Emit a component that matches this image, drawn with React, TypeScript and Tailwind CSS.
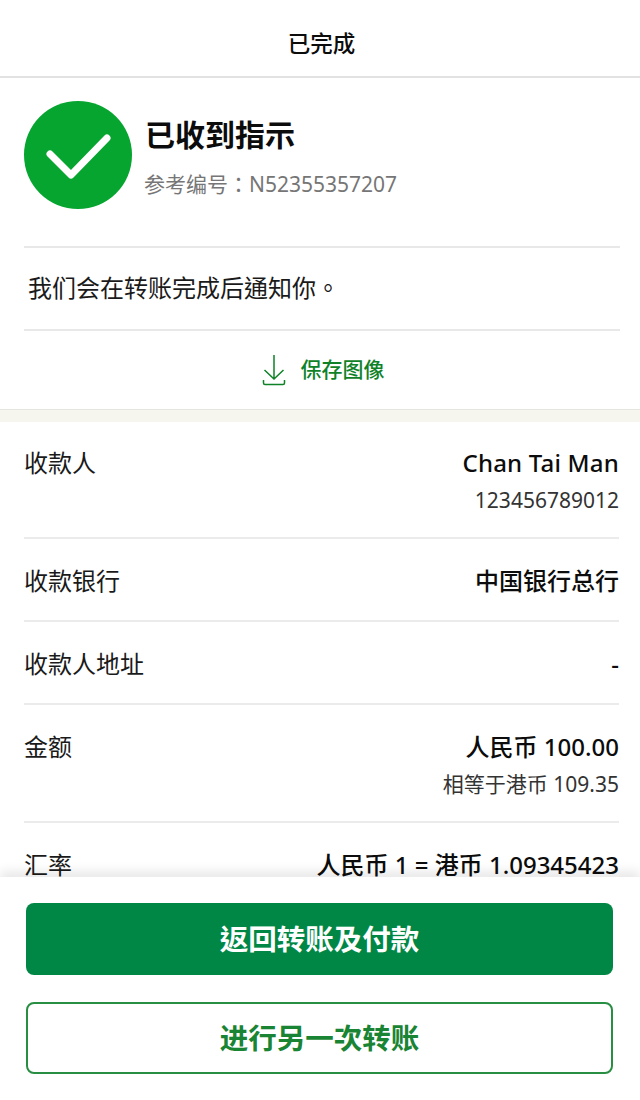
function Row({ label, value, sub, cls, valueCls }: { label: string; value: string; sub?: string; cls: string; valueCls?: string }) {
  return (
    <div className={`flex justify-between border-b-2 border-[#ebebeb] ${cls}`}>
      <div className="text-[24px] leading-[32px] text-[#1a1a1a]">{label}</div>
      <div className="flex flex-col items-end">
        <div className={`text-[24px] leading-[32px] font-medium text-[#0c0c0c] ${valueCls ?? ""}`}>{value}</div>
        {sub && <div className="mt-[7px] text-[21px] leading-[28px] text-[#333]">{sub}</div>}
      </div>
    </div>
  );
}

export default function App() {
  return (
    <div className="flex h-[1100px] w-[640px] flex-col overflow-hidden bg-white font-['Noto_Sans','Noto_Sans_CJK_TC',sans-serif]">
      <header className="flex h-[78px] shrink-0 items-center justify-center border-b-2 border-[#e2e2e2] pt-[12px] pl-[3px] text-[22.500px] font-medium text-[#0c0c0c]">
        已完成
      </header>
      <main className="min-h-0 flex-1 overflow-hidden">
        <section className="pr-[20px] pl-[24px]">
          <div className="flex h-[170px] items-start gap-[13px] border-b-2 border-[#e8e8e8] pt-[23px]">
            <div className="flex h-[108px] w-[108px] shrink-0 items-center justify-center rounded-full bg-[#05a52f]">
              <svg viewBox="0 0 108 108" className="h-[108px] w-[108px]" fill="none">
                <path d="M26 53 L47 74 L83 37" stroke="#fff" strokeWidth="7" strokeLinecap="round" strokeLinejoin="round" />
              </svg>
            </div>
            <div className="pt-[13px]">
              <div className="text-[30px] leading-[42px] font-semibold text-[#0c0c0c]">已收到指示</div>
              <div className="mt-[13px] -ml-[1px] text-[21px] leading-[30px] text-[#767676]">参考编号：N52355357207</div>
            </div>
          </div>
          <div className="flex h-[83px] items-center border-b-2 border-[#e8e8e8] pb-[2px] pl-[4px] text-[24px] text-[#1a1a1a]">
            我们会在转账完成后通知你。
          </div>
          <div className="flex h-[78px] items-center justify-center gap-[15px] pl-[2px] text-[21px] font-medium text-[#0f8228]">
            <svg viewBox="0 0 24 32" className="h-[32px] w-[24px]" fill="none" stroke="#0f8228" strokeWidth="1.5">
              <path d="M12 1 V25 M2.500 16 L12 25 L21.500 16" />
              <path d="M1.500 26 V29 Q1.500 30.500 3 30.500 H21 Q22.500 30.500 22.500 29 V26" />
            </svg>
            <span>保存图像</span>
          </div>
        </section>
        <div className="h-[13px] border-t border-[#e6e6e0] bg-[#f6f6ee]" />
        <section className="pr-[21px] pl-[24px]">
          <Row label="收款人" value="Chan Tai Man" valueCls="tracking-[0.2px]" sub="123456789012" cls="h-[117px] pt-[25px]" />
          <Row label="收款银行" value="中国银行总行" cls="h-[83px] pt-[26px]" />
          <Row label="收款人地址" value="-" cls="h-[83px] pt-[26px]" />
          <Row label="金额" value="人民币 100.00" sub="相等于港币 109.35" cls="h-[118px] pt-[26px]" />
          <div className="flex justify-between pt-[26px]">
            <div className="text-[24px] leading-[32px] text-[#1a1a1a]">汇率</div>
            <div className="text-[24px] leading-[32px] font-medium text-[#0c0c0c]">人民币 1 = 港币 1.09345423</div>
          </div>
        </section>
      </main>
      <footer className="relative z-10 flex h-[223px] shrink-0 flex-col gap-[27px] bg-white px-[26px] pt-[26px] shadow-[0_-6px_10px_rgba(0,0,0,0.09)]">
        <button className="flex h-[72px] w-[587px] items-center justify-center rounded-[8px] bg-[#018745] text-[28.500px] font-semibold text-white">
          返回转账及付款
        </button>
        <button className="flex h-[72px] w-[587px] items-center justify-center rounded-[8px] border-2 border-[#288e42] bg-white text-[28.500px] font-semibold text-[#188434]">
          进行另一次转账
        </button>
      </footer>
    </div>
  );
}
